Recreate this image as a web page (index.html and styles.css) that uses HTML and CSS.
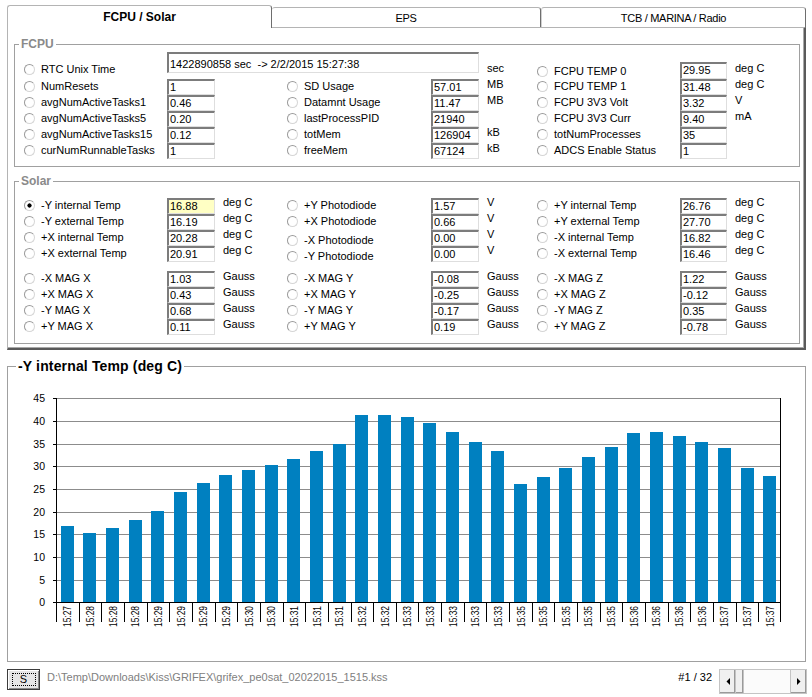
FILE: index.html
```html
<!DOCTYPE html>
<html>
<head>
<meta charset="utf-8">
<link rel="stylesheet" href="styles.css">
</head>
<body>
<div class="app">
  <div class="tabs">
    <div class="tab tab-active">FCPU / Solar</div>
    <div class="tab tab-eps">EPS</div>
    <div class="tab tab-tcb">TCB / MARINA / Radio</div>
  </div>
  <div class="panel">
    <fieldset class="group">
      <legend>FCPU</legend>
      <div class="form form-fcpu">
        <div class="opt a"><span class="radio"></span>RTC Unix Time</div>
        <div class="box wide">1422890858 sec  -&gt; 2/2/2015 15:27:38</div>
        <span class="unit a">sec</span>
        <div class="opt a3"><span class="radio"></span>FCPU TEMP 0</div>
        <div class="box a3">29.95</div>
        <span class="unit a">deg C</span>

        <div class="opt"><span class="radio"></span>NumResets</div>
        <div class="box">1</div>
        <span class="unit"></span>
        <div class="opt"><span class="radio"></span>SD Usage</div>
        <div class="box">57.01</div>
        <span class="unit">MB</span>
        <div class="opt"><span class="radio"></span>FCPU TEMP 1</div>
        <div class="box">31.48</div>
        <span class="unit">deg C</span>

        <div class="opt"><span class="radio"></span>avgNumActiveTasks1</div>
        <div class="box">0.46</div>
        <span class="unit"></span>
        <div class="opt"><span class="radio"></span>Datamnt Usage</div>
        <div class="box">11.47</div>
        <span class="unit">MB</span>
        <div class="opt"><span class="radio"></span>FCPU 3V3 Volt</div>
        <div class="box">3.32</div>
        <span class="unit">V</span>

        <div class="opt"><span class="radio"></span>avgNumActiveTasks5</div>
        <div class="box">0.20</div>
        <span class="unit"></span>
        <div class="opt"><span class="radio"></span>lastProcessPID</div>
        <div class="box">21940</div>
        <span class="unit"></span>
        <div class="opt"><span class="radio"></span>FCPU 3V3 Curr</div>
        <div class="box">9.40</div>
        <span class="unit">mA</span>

        <div class="opt"><span class="radio"></span>avgNumActiveTasks15</div>
        <div class="box">0.12</div>
        <span class="unit"></span>
        <div class="opt"><span class="radio"></span>totMem</div>
        <div class="box">126904</div>
        <span class="unit">kB</span>
        <div class="opt"><span class="radio"></span>totNumProcesses</div>
        <div class="box">35</div>
        <span class="unit"></span>

        <div class="opt"><span class="radio"></span>curNumRunnableTasks</div>
        <div class="box">1</div>
        <span class="unit"></span>
        <div class="opt"><span class="radio"></span>freeMem</div>
        <div class="box">67124</div>
        <span class="unit">kB</span>
        <div class="opt"><span class="radio"></span>ADCS Enable Status</div>
        <div class="box">1</div>
        <span class="unit"></span>
      </div>
    </fieldset>

    <fieldset class="group group-solar">
      <legend>Solar</legend>
      <div class="form form-solar">
        <div class="opt"><span class="radio on"></span>-Y internal Temp</div>
        <div class="box hl">16.88</div>
        <span class="unit s">deg C</span>
        <div class="opt"><span class="radio"></span>+Y Photodiode</div>
        <div class="box">1.57</div>
        <span class="unit s">V</span>
        <div class="opt"><span class="radio"></span>+Y internal Temp</div>
        <div class="box">26.76</div>
        <span class="unit s">deg C</span>

        <div class="opt"><span class="radio"></span>-Y external Temp</div>
        <div class="box">16.19</div>
        <span class="unit s">deg C</span>
        <div class="opt"><span class="radio"></span>+X Photodiode</div>
        <div class="box">0.66</div>
        <span class="unit s">V</span>
        <div class="opt"><span class="radio"></span>+Y external Temp</div>
        <div class="box">27.70</div>
        <span class="unit s">deg C</span>

        <div class="opt"><span class="radio"></span>+X internal Temp</div>
        <div class="box">20.28</div>
        <span class="unit s">deg C</span>
        <div class="opt low"><span class="radio"></span>-X Photodiode</div>
        <div class="box">0.00</div>
        <span class="unit s">V</span>
        <div class="opt"><span class="radio"></span>-X internal Temp</div>
        <div class="box">16.82</div>
        <span class="unit s">deg C</span>

        <div class="opt"><span class="radio"></span>+X external Temp</div>
        <div class="box">20.91</div>
        <span class="unit s">deg C</span>
        <div class="opt low"><span class="radio"></span>-Y Photodiode</div>
        <div class="box">0.00</div>
        <span class="unit s">V</span>
        <div class="opt"><span class="radio"></span>-X external Temp</div>
        <div class="box">16.46</div>
        <span class="unit s">deg C</span>

        <div class="spacer"></div>

        <div class="opt"><span class="radio"></span>-X MAG X</div>
        <div class="box">1.03</div>
        <span class="unit">Gauss</span>
        <div class="opt"><span class="radio"></span>-X MAG Y</div>
        <div class="box">-0.08</div>
        <span class="unit">Gauss</span>
        <div class="opt"><span class="radio"></span>-X MAG Z</div>
        <div class="box">1.22</div>
        <span class="unit">Gauss</span>

        <div class="opt"><span class="radio"></span>+X MAG X</div>
        <div class="box">0.43</div>
        <span class="unit">Gauss</span>
        <div class="opt"><span class="radio"></span>+X MAG Y</div>
        <div class="box">-0.25</div>
        <span class="unit">Gauss</span>
        <div class="opt"><span class="radio"></span>+X MAG Z</div>
        <div class="box">-0.12</div>
        <span class="unit">Gauss</span>

        <div class="opt"><span class="radio"></span>-Y MAG X</div>
        <div class="box">0.68</div>
        <span class="unit">Gauss</span>
        <div class="opt"><span class="radio"></span>-Y MAG Y</div>
        <div class="box">-0.17</div>
        <span class="unit">Gauss</span>
        <div class="opt"><span class="radio"></span>-Y MAG Z</div>
        <div class="box">0.35</div>
        <span class="unit">Gauss</span>

        <div class="opt"><span class="radio"></span>+Y MAG X</div>
        <div class="box">0.11</div>
        <span class="unit">Gauss</span>
        <div class="opt"><span class="radio"></span>+Y MAG Y</div>
        <div class="box">0.19</div>
        <span class="unit">Gauss</span>
        <div class="opt"><span class="radio"></span>+Y MAG Z</div>
        <div class="box">-0.78</div>
        <span class="unit">Gauss</span>
      </div>
    </fieldset>
  </div>

  <fieldset class="chart">
    <legend>-Y internal Temp (deg C)</legend>
    <svg class="plot" width="797" height="287" viewBox="0 0 797 287">
      <g transform="translate(-8 -374)">
        <path class="grid" d="M57 398.5H780M57 421.5H780M57 444.5H780M57 466.5H780M57 489.5H780M57 512.5H780M57 534.5H780M57 557.5H780M57 580.5H780"/>
        <path class="axis" d="M53 398.5H57M53 421.5H57M53 444.5H57M53 466.5H57M53 489.5H57M53 512.5H57M53 534.5H57M53 557.5H57M53 580.5H57"/>
        <g class="bars">
          <rect x="61" y="526" width="13" height="76"/>
          <rect x="83" y="533" width="13" height="69"/>
          <rect x="106" y="528" width="13" height="74"/>
          <rect x="129" y="520" width="13" height="82"/>
          <rect x="151" y="511" width="13" height="91"/>
          <rect x="174" y="492" width="13" height="110"/>
          <rect x="197" y="483" width="13" height="119"/>
          <rect x="219" y="475" width="13" height="127"/>
          <rect x="242" y="470" width="13" height="132"/>
          <rect x="265" y="465" width="13" height="137"/>
          <rect x="287" y="459" width="13" height="143"/>
          <rect x="310" y="451" width="13" height="151"/>
          <rect x="333" y="444" width="13" height="158"/>
          <rect x="355" y="415" width="13" height="187"/>
          <rect x="378" y="415" width="13" height="187"/>
          <rect x="401" y="417" width="13" height="185"/>
          <rect x="423" y="423" width="13" height="179"/>
          <rect x="446" y="432" width="13" height="170"/>
          <rect x="469" y="442" width="13" height="160"/>
          <rect x="491" y="451" width="13" height="151"/>
          <rect x="514" y="484" width="13" height="118"/>
          <rect x="537" y="477" width="13" height="125"/>
          <rect x="559" y="468" width="13" height="134"/>
          <rect x="582" y="457" width="13" height="145"/>
          <rect x="605" y="447" width="13" height="155"/>
          <rect x="627" y="433" width="13" height="169"/>
          <rect x="650" y="432" width="13" height="170"/>
          <rect x="673" y="436" width="13" height="166"/>
          <rect x="695" y="442" width="13" height="160"/>
          <rect x="718" y="448" width="13" height="154"/>
          <rect x="741" y="468" width="13" height="134"/>
          <rect x="763" y="476" width="13" height="126"/>
        </g>
        <path class="axis" d="M56.5 398V603M780.5 398V603M53 602.5H781"/>
        <path class="axis" d="M56.5 602V622M79.5 602V622M101.5 602V622M124.5 602V622M147.5 602V622M169.5 602V622M192.5 602V622M215.5 602V622M237.5 602V622M260.5 602V622M283.5 602V622M305.5 602V622M328.5 602V622M351.5 602V622M373.5 602V622M396.5 602V622M418.5 602V622M441.5 602V622M464.5 602V622M486.5 602V622M509.5 602V622M532.5 602V622M554.5 602V622M577.5 602V622M600.5 602V622M622.5 602V622M645.5 602V622M668.5 602V622M690.5 602V622M713.5 602V622M736.5 602V622M758.5 602V622M780.5 602V622"/>
        <g class="ylab">
          <text x="45" y="402">45</text>
          <text x="45" y="425">40</text>
          <text x="45" y="448">35</text>
          <text x="45" y="470">30</text>
          <text x="45" y="493">25</text>
          <text x="45" y="516">20</text>
          <text x="45" y="538">15</text>
          <text x="45" y="561">10</text>
          <text x="45" y="584">5</text>
          <text x="45" y="606">0</text>
        </g>
        <g class="xlab">
          <text transform="translate(71.3 606) rotate(-90)" textLength="21" lengthAdjust="spacingAndGlyphs">15:27</text>
          <text transform="translate(94 606) rotate(-90)" textLength="21" lengthAdjust="spacingAndGlyphs">15:28</text>
          <text transform="translate(116.6 606) rotate(-90)" textLength="21" lengthAdjust="spacingAndGlyphs">15:28</text>
          <text transform="translate(139.3 606) rotate(-90)" textLength="21" lengthAdjust="spacingAndGlyphs">15:28</text>
          <text transform="translate(161.9 606) rotate(-90)" textLength="21" lengthAdjust="spacingAndGlyphs">15:29</text>
          <text transform="translate(184.6 606) rotate(-90)" textLength="21" lengthAdjust="spacingAndGlyphs">15:29</text>
          <text transform="translate(207.3 606) rotate(-90)" textLength="21" lengthAdjust="spacingAndGlyphs">15:29</text>
          <text transform="translate(229.9 606) rotate(-90)" textLength="21" lengthAdjust="spacingAndGlyphs">15:29</text>
          <text transform="translate(252.6 606) rotate(-90)" textLength="21" lengthAdjust="spacingAndGlyphs">15:30</text>
          <text transform="translate(275.2 606) rotate(-90)" textLength="21" lengthAdjust="spacingAndGlyphs">15:30</text>
          <text transform="translate(297.9 606) rotate(-90)" textLength="21" lengthAdjust="spacingAndGlyphs">15:31</text>
          <text transform="translate(320.5 606) rotate(-90)" textLength="21" lengthAdjust="spacingAndGlyphs">15:31</text>
          <text transform="translate(343.2 606) rotate(-90)" textLength="21" lengthAdjust="spacingAndGlyphs">15:31</text>
          <text transform="translate(365.9 606) rotate(-90)" textLength="21" lengthAdjust="spacingAndGlyphs">15:32</text>
          <text transform="translate(388.5 606) rotate(-90)" textLength="21" lengthAdjust="spacingAndGlyphs">15:32</text>
          <text transform="translate(411.2 606) rotate(-90)" textLength="21" lengthAdjust="spacingAndGlyphs">15:33</text>
          <text transform="translate(433.8 606) rotate(-90)" textLength="21" lengthAdjust="spacingAndGlyphs">15:33</text>
          <text transform="translate(456.5 606) rotate(-90)" textLength="21" lengthAdjust="spacingAndGlyphs">15:33</text>
          <text transform="translate(479.1 606) rotate(-90)" textLength="21" lengthAdjust="spacingAndGlyphs">15:33</text>
          <text transform="translate(501.8 606) rotate(-90)" textLength="21" lengthAdjust="spacingAndGlyphs">15:33</text>
          <text transform="translate(524.5 606) rotate(-90)" textLength="21" lengthAdjust="spacingAndGlyphs">15:35</text>
          <text transform="translate(547.1 606) rotate(-90)" textLength="21" lengthAdjust="spacingAndGlyphs">15:35</text>
          <text transform="translate(569.8 606) rotate(-90)" textLength="21" lengthAdjust="spacingAndGlyphs">15:35</text>
          <text transform="translate(592.4 606) rotate(-90)" textLength="21" lengthAdjust="spacingAndGlyphs">15:35</text>
          <text transform="translate(615.1 606) rotate(-90)" textLength="21" lengthAdjust="spacingAndGlyphs">15:35</text>
          <text transform="translate(637.7 606) rotate(-90)" textLength="21" lengthAdjust="spacingAndGlyphs">15:36</text>
          <text transform="translate(660.4 606) rotate(-90)" textLength="21" lengthAdjust="spacingAndGlyphs">15:36</text>
          <text transform="translate(683 606) rotate(-90)" textLength="21" lengthAdjust="spacingAndGlyphs">15:36</text>
          <text transform="translate(705.7 606) rotate(-90)" textLength="21" lengthAdjust="spacingAndGlyphs">15:36</text>
          <text transform="translate(728.4 606) rotate(-90)" textLength="21" lengthAdjust="spacingAndGlyphs">15:37</text>
          <text transform="translate(751 606) rotate(-90)" textLength="21" lengthAdjust="spacingAndGlyphs">15:37</text>
          <text transform="translate(773.7 606) rotate(-90)" textLength="21" lengthAdjust="spacingAndGlyphs">15:37</text>
        </g>
      </g>
    </svg>
  </fieldset>

  <div class="status">
    <div class="btn"><span>S</span></div>
    <span class="path">D:\Temp\Downloads\Kiss\GRIFEX\grifex_pe0sat_02022015_1515.kss</span>
    <span class="count">#1 / 32</span>
    <div class="scroll">
      <div class="sb-btn"><svg width="4" height="7" viewBox="0 0 4 7"><path d="M4 0V7L0.5 3.5Z" fill="#000"/></svg></div>
      <div class="sb-thumb"></div>
      <div class="sb-track"></div>
      <div class="sb-btn"><svg width="4" height="7" viewBox="0 0 4 7"><path d="M0 0V7L3.5 3.5Z" fill="#000"/></svg></div>
    </div>
  </div>
</div>
</body>
</html>
```

FILE: styles.css
```css
* { box-sizing: border-box; }

body {
  margin: 0;
  background: #fff;
  font-family: "Liberation Sans", Arial, sans-serif;
  font-size: 11px;
  color: #000;
}

.app {
  width: 812px;
  height: 697px;
  padding: 5px 0 0 7px;
  overflow: hidden;
}

/* ---- tabs ---- */
.tabs {
  display: flex;
  align-items: flex-end;
  height: 22px;
  width: 799px;
  position: relative;
  z-index: 1;
}

.tab {
  height: 20px;
  display: flex;
  align-items: center;
  justify-content: center;
  border: 1px solid #b4b4b4;
  border-bottom: none;
  border-right: 1px solid #6e6e6e;
  border-radius: 3px 3px 0 0;
  background: #fff;
  font-size: 11px;
  letter-spacing: -0.3px;
}

.tab-active {
  width: 265px;
  height: 23px;
  margin-bottom: -1px;
  font-weight: bold;
  font-size: 12px;
  letter-spacing: 0;
  padding-bottom: 1px;
}

.tab-eps { width: 269px; border-left: none; }
.tab-tcb { width: 265px; border-left-color: #d0d0d0; }

/* ---- panel ---- */
.panel {
  width: 799px;
  border-top: 1px solid #b4b4b4;
  border-left: 1px solid #b4b4b4;
  border-right: 2px solid #5a5a5a;
  border-bottom: 2px solid #5a5a5a;
  box-shadow: inset -1px -1px 0 #a8a8a8;
  padding: 9px 4px 4px 6px;
}

.group {
  margin: 0;
  padding: 0;
  border: 1px solid #a0a0a0;
  min-width: 0;
}

.group legend {
  margin-left: 4px;
  padding: 0 2px;
  font-weight: bold;
  font-size: 12px;
  line-height: 14px;
  color: #8a8a8a;
}

.group-solar { margin-top: 7px; }

.form {
  display: grid;
  grid-template-columns: 143px 48px 72px 144px 48px 58px 143px 47px 1fr;
  margin-left: 9px;
}

.form-fcpu {
  grid-template-rows: 27px repeat(5, 16px);
  margin-top: 1px;
  margin-bottom: 7px;
}

.form-solar {
  grid-template-rows: repeat(4, 16px) 9px repeat(4, 16px);
  margin-top: 10px;
  margin-bottom: 8px;
}

.spacer { grid-column: 1 / -1; }

.opt {
  display: flex;
  align-items: center;
  height: 12px;
  line-height: 12px;
  margin-top: 1px;
  white-space: nowrap;
}

.opt.a { margin-top: 11px; }
.opt.a3 { margin-top: 13px; }
.opt.low { margin-top: 4px; }

.radio {
  flex: none;
  width: 11px;
  height: 11px;
  margin-right: 6px;
  border-radius: 50%;
  border: 1px solid;
  border-color: #9a9a9a #d6d6d6 #d6d6d6 #9a9a9a;
  background: #fff;
}

.radio.on {
  background: radial-gradient(circle, #000 0 1.8px, #fff 2.4px);
}

.unit {
  line-height: 12px;
  margin-top: -1px;
  padding-left: 8px;
  white-space: nowrap;
}

.unit.a { margin-top: 10px; }
.unit.s { margin-top: -2px; }

.box {
  height: 16px;
  border-style: solid;
  border-width: 2px 1px 1px 2px;
  border-color: #7c7c7c #dedede #dedede #7c7c7c;
  padding-left: 1px;
  line-height: 13px;
  overflow: hidden;
  white-space: pre;
  background: #fff;
}

.box.hl { background: #ffffc4; }

.box.wide {
  grid-column: span 4;
  height: 21px;
  padding-top: 4px;
}

.box.a3 {
  margin-top: 10px;
  height: 17px;
}

/* ---- chart ---- */
.chart {
  width: 799px;
  margin: 8px 0 0 0;
  padding: 0;
  border: 1px solid #a0a0a0;
  min-width: 0;
}

.chart legend {
  margin-left: 8px;
  padding: 0 2px;
  font-weight: bold;
  font-size: 14px;
  line-height: 16px;
  letter-spacing: 0.15px;
  color: #000;
}

.plot { display: block; }

.grid { stroke: #8c8c8c; stroke-width: 1; fill: none; }
.axis { stroke: #000; stroke-width: 1; fill: none; }
.bars rect { fill: #0080c0; }

.ylab text {
  font-family: "Liberation Sans", Arial, sans-serif;
  font-size: 10.5px;
  text-anchor: end;
  fill: #000;
}

.xlab text {
  font-family: "Liberation Sans", Arial, sans-serif;
  font-size: 11px;
  text-anchor: end;
  fill: #000;
}

/* ---- status bar ---- */
.status {
  display: flex;
  align-items: flex-start;
  height: 25px;
  margin-top: 7px;
}

.btn {
  width: 33px;
  height: 21px;
  display: flex;
  align-items: center;
  justify-content: center;
  border: 1px solid #3c3c3c;
  box-shadow: inset 1px 1px 0 #fff, inset -1px -1px 0 #8a8a8a;
  background: #e6e6e6;
}

.btn span {
  width: 24px;
  height: 13px;
  line-height: 11px;
  text-align: center;
  border: 1px dotted #000;
}

.path {
  margin-left: 7px;
  line-height: 16px;
  color: #808080;
}

.count {
  margin-left: auto;
  line-height: 16px;
}

.scroll {
  display: flex;
  width: 88px;
  height: 25px;
  margin-left: 7px;
  margin-right: 5px;
  border: 1px solid #c4c4c4;
  background: #f6f6f6;
}

.sb-btn {
  width: 16px;
  display: flex;
  align-items: center;
  justify-content: center;
  background: #f0f0f0;
  border-right: 1px solid #c4c4c4;
  box-shadow: inset -1px -1px 0 #9a9a9a;
}

.sb-btn:last-child {
  border-right: none;
  border-left: 1px solid #c4c4c4;
}

.sb-thumb {
  width: 8px;
  background: #f0f0f0;
  border-right: 1px solid #c4c4c4;
  box-shadow: inset -1px -1px 0 #9a9a9a;
}

.sb-track {
  flex: 1;
  background: #fbfbfb;
}
```
